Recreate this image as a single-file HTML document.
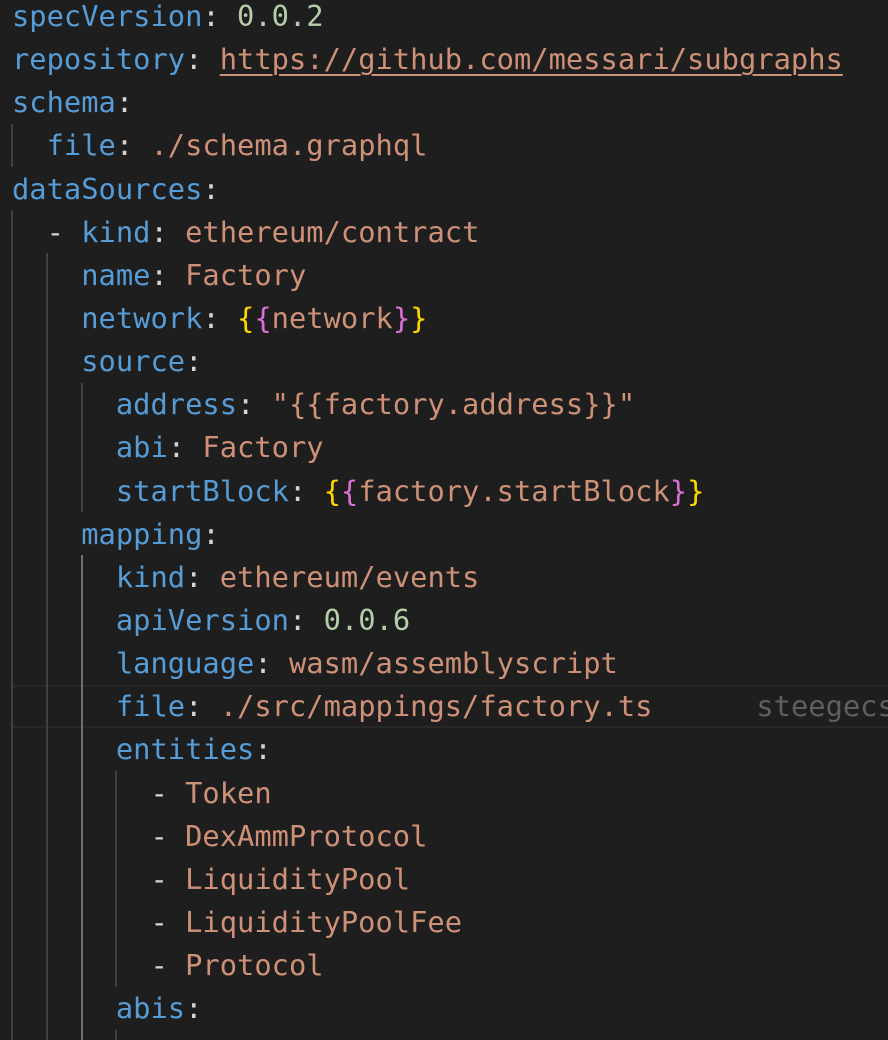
<!DOCTYPE html>
<html><head><meta charset="utf-8"><style>
html,body{margin:0;padding:0;background:#1e1e1e;width:888px;height:1040px;overflow:hidden;}
#c{position:absolute;left:12px;top:-5px;width:876px;overflow:hidden;font-family:"DejaVu Sans Mono","Liberation Mono",monospace;font-size:28.75px;line-height:43.14px;color:#d4d4d4;white-space:pre;}
.k{color:#569cd6}.s{color:#ce9178}.n{color:#b5cea8}.y{color:#ffd700}.p{color:#da70d6}
.u{text-decoration:underline;text-underline-offset:5px;text-decoration-thickness:2px}
.g{position:absolute;width:2px;background:#404040}
.ga{background:#707070}
.hl{position:absolute;left:12px;right:0;top:685px;height:39px;border-top:2px solid #282828;border-bottom:2px solid #282828}
.bl{color:#5f5f5f}
</style></head><body>
<div class="hl"></div>
<div class="g" style="left:11px;top:124px;height:43px"></div>
<div class="g" style="left:11px;top:210px;height:830px"></div>
<div class="g" style="left:46px;top:253px;height:787px"></div>
<div class="g" style="left:81px;top:383px;height:129px"></div>
<div class="g ga" style="left:81px;top:555px;height:485px"></div>
<div class="g" style="left:115px;top:771px;height:216px"></div>
<div class="g" style="left:115px;top:1030px;height:10px"></div>
<div id="c"><span class="k">specVersion</span>: <span class="n">0.0.2</span>
<span class="k">repository</span>: <span class="s u">https://github.com/messari/subgraphs</span>
<span class="k">schema</span>:
  <span class="k">file</span>: <span class="s">./schema.graphql</span>
<span class="k">dataSources</span>:
  - <span class="k">kind</span>: <span class="s">ethereum/contract</span>
    <span class="k">name</span>: <span class="s">Factory</span>
    <span class="k">network</span>: <span class="y">{</span><span class="p">{</span><span class="s">network</span><span class="p">}</span><span class="y">}</span>
    <span class="k">source</span>:
      <span class="k">address</span>: <span class="s">"{{factory.address}}"</span>
      <span class="k">abi</span>: <span class="s">Factory</span>
      <span class="k">startBlock</span>: <span class="y">{</span><span class="p">{</span><span class="s">factory.startBlock</span><span class="p">}</span><span class="y">}</span>
    <span class="k">mapping</span>:
      <span class="k">kind</span>: <span class="s">ethereum/events</span>
      <span class="k">apiVersion</span>: <span class="n">0.0.6</span>
      <span class="k">language</span>: <span class="s">wasm/assemblyscript</span>
      <span class="k">file</span>: <span class="s">./src/mappings/factory.ts</span>      <span class="bl">steegecs</span>
      <span class="k">entities</span>:
        - <span class="s">Token</span>
        - <span class="s">DexAmmProtocol</span>
        - <span class="s">LiquidityPool</span>
        - <span class="s">LiquidityPoolFee</span>
        - <span class="s">Protocol</span>
      <span class="k">abis</span>:
</div>
</body></html>
